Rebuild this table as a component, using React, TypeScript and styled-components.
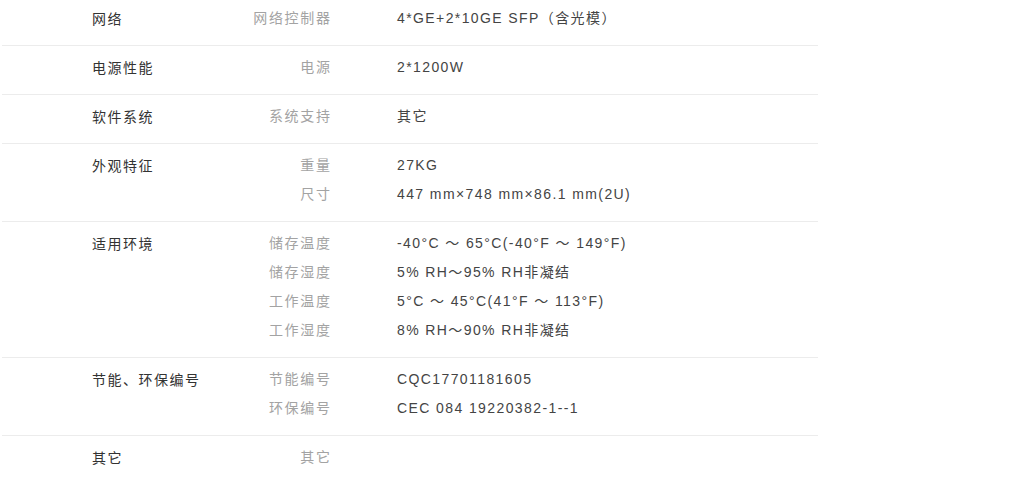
import React from "react";
import styled, { createGlobalStyle } from "styled-components";

const GlobalStyle = createGlobalStyle`
  html, body {
    margin: 0;
    padding: 0;
    background: #fff;
  }
  body {
    font-family: "Liberation Sans", "Noto Sans CJK SC", sans-serif;
    font-size: 14px;
  }
`;

const SpecList = styled.div`
  margin: -3px 0 0 2px;
  width: 816px;
`;

const SpecRow = styled.div<{ $last?: boolean }>`
  display: grid;
  grid-template-columns: 150px 88px 1fr;
  align-items: start;
  padding: 7px 0 12px 90px;
  border-bottom: ${(p) => (p.$last ? "none" : "1px solid #ececec")};
`;

const GroupLabel = styled.div`
  color: #333;
  line-height: 29px;
  margin: 1px 0 -1px;
  letter-spacing: 1.5px;
`;

const SubLabels = styled.div`
  display: flex;
  flex-direction: column;
  align-items: flex-end;
`;

const SubLabel = styled.div`
  color: #a3a3a3;
  line-height: 29px;
  letter-spacing: 1.7px;
  margin-right: -1.7px;
`;

const Values = styled.div`
  display: flex;
  flex-direction: column;
  padding-left: 67px;
`;

const Value = styled.div`
  color: #444;
  line-height: 29px;
  letter-spacing: 1.4px;
  white-space: nowrap;
`;

type Spec = { group: string; items: [string, string][] };

const specs: Spec[] = [
  { group: "网络", items: [["网络控制器", "4*GE+2*10GE SFP（含光模）"]] },
  { group: "电源性能", items: [["电源", "2*1200W"]] },
  { group: "软件系统", items: [["系统支持", "其它"]] },
  {
    group: "外观特征",
    items: [
      ["重量", "27KG"],
      ["尺寸", "447 mm×748 mm×86.1 mm(2U)"],
    ],
  },
  {
    group: "适用环境",
    items: [
      ["储存温度", "-40°C ～ 65°C(-40°F ～ 149°F)"],
      ["储存湿度", "5% RH～95% RH非凝结"],
      ["工作温度", "5°C ～ 45°C(41°F ～ 113°F)"],
      ["工作湿度", "8% RH～90% RH非凝结"],
    ],
  },
  {
    group: "节能、环保编号",
    items: [
      ["节能编号", "CQC17701181605"],
      ["环保编号", "CEC 084 19220382-1--1"],
    ],
  },
  { group: "其它", items: [["其它", ""]] },
];

export default function App() {
  return (
    <>
      <GlobalStyle />
      <SpecList>
        {specs.map((spec, i) => (
          <SpecRow key={spec.group} $last={i === specs.length - 1}>
            <GroupLabel>{spec.group}</GroupLabel>
            <SubLabels>
              {spec.items.map(([label]) => (
                <SubLabel key={label}>{label}</SubLabel>
              ))}
            </SubLabels>
            <Values>
              {spec.items.map(([label, value]) => (
                <Value key={label}>{value || "\u00a0"}</Value>
              ))}
            </Values>
          </SpecRow>
        ))}
      </SpecList>
    </>
  );
}
